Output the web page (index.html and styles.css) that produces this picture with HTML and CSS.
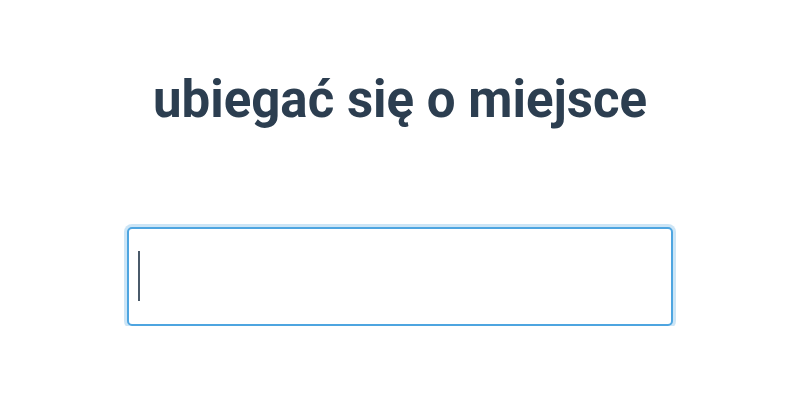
FILE: index.html
```html
<!DOCTYPE html>
<html lang="pl">
<head>
  <meta charset="UTF-8" />
  <meta name="viewport" content="width=device-width, initial-scale=1.0"/>
  <title>ubiegać się o miejsce</title>
  <link rel="stylesheet" href="styles.css">
</head>
<body>
  <main class="prompt">
    <h1 class="prompt-title">ubiegać się o miejsce</h1>
    <div class="field">
      <input type="text" class="field-input" aria-label="odpowiedź" autofocus />
      <span class="caret"></span>
    </div>
  </main>
</body>
</html>
```

FILE: styles.css
```css
body {
  margin: 0;
  font-family: Roboto, 'Liberation Sans', sans-serif;
  background: #fff;
  color: #2c3e50;
}

.prompt {
  display: flex;
  flex-direction: column;
  align-items: center;
  padding-top: 70px;
}

.prompt-title {
  margin: 0;
  font-size: 51px;
  font-weight: 700;
  line-height: 60px;
  color: #2c3e50;
}

.field {
  position: relative;
  margin-top: 97px;
}

.field-input {
  box-sizing: border-box;
  width: 546px;
  height: 99px;
  padding: 0 10px;
  border: 2px solid #4ea5e0;
  border-radius: 5px;
  outline: none;
  box-shadow: 0 0 0 3px rgba(52, 152, 219, 0.25);
  font-family: inherit;
  font-size: 40px;
  color: #2c3e50;
  caret-color: transparent;
}

.caret {
  position: absolute;
  left: 11px;
  top: 24px;
  width: 2px;
  height: 50px;
  background: #4a5a6a;
}
```
